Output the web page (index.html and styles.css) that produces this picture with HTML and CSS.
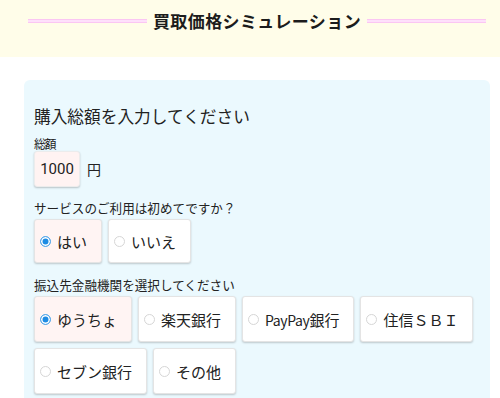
FILE: index.html
```html
<!DOCTYPE html>
<html lang="ja">
<head>
<meta charset="utf-8">
<title>買取価格シミュレーション</title>
<link rel="stylesheet" href="styles.css">
</head>
<body>
<header class="hero">
  <span class="rule"></span>
  <h1 class="title">買取価格シミュレーション</h1>
  <span class="rule"></span>
</header>
<main class="card">
  <h2 class="heading">購入総額を入力してください</h2>
  <div class="field-label">総額</div>
  <div class="amount-row">
    <input class="amount" type="text" value="1000">
    <span class="unit">円</span>
  </div>
  <div class="q-label">サービスのご利用は初めてですか？</div>
  <div class="options">
    <label class="opt checked"><input type="radio" name="first" checked><span>はい</span></label>
    <label class="opt"><input type="radio" name="first"><span>いいえ</span></label>
  </div>
  <div class="q-label q-bank">振込先金融機関を選択してください</div>
  <div class="options banks">
    <label class="opt checked"><input type="radio" name="bank" checked><span>ゆうちょ</span></label>
    <label class="opt"><input type="radio" name="bank"><span>楽天銀行</span></label>
    <label class="opt"><input type="radio" name="bank"><span><span class="latin">PayPay</span>銀行</span></label>
    <label class="opt"><input type="radio" name="bank"><span>住信ＳＢＩ</span></label>
    <label class="opt"><input type="radio" name="bank"><span>セブン銀行</span></label>
    <label class="opt"><input type="radio" name="bank"><span>その他</span></label>
  </div>
</main>
</body>
</html>
```
FILE: styles.css
```css
html, body {
  margin: 0;
  padding: 0;
  background: #ffffff;
  font-family: "Noto Sans CJK JP", "Noto Sans", sans-serif;
  color: #222222;
}

.hero {
  height: 57px;
  background: #fffde9;
  display: flex;
  align-items: flex-start;
  padding: 9px 14px 0 28px;
  box-sizing: border-box;
  gap: 6px;
}

.rule {
  flex: 1;
  height: 2px;
  margin-top: 10px;
  border-top: 1px solid #fbc6f3;
  border-bottom: 1px solid #fbc6f3;
  background: #fee0fb;
}

.title {
  margin: 0;
  font-size: 17px;
  font-weight: 700;
  line-height: 24px;
  letter-spacing: 0.4px;
  color: #1c1c1c;
}

.card {
  margin: 23px 10px 0 24px;
  background: #ebf9fe;
  border-radius: 6px;
  padding: 25px 10px 10px 10px;
  min-height: 320px;
  box-sizing: border-box;
}

.heading {
  margin: 0;
  font-size: 16.7px;
  font-weight: 400;
  line-height: 22px;
  color: #222;
}

.field-label {
  margin-top: 9px;
  font-size: 12px;
  line-height: 15px;
  letter-spacing: -1.5px;
}

.amount-row {
  display: flex;
  align-items: center;
  gap: 7px;
  margin-top: 0;
}

.amount {
  width: 46px;
  height: 36px;
  box-sizing: border-box;
  border: 1px solid #ececec;
  border-radius: 3px;
  background: #fff3f2;
  box-shadow: 0 1px 2px rgba(0, 0, 0, 0.22);
  font-family: "Roboto", "Noto Sans", sans-serif;
  font-size: 15px;
  color: #222;
  text-align: center;
  padding: 0;
}

.unit {
  font-size: 14px;
}

.q-label {
  margin-top: 13px;
  font-size: 12.6px;
  line-height: 16px;
}

.q-bank {
  margin-top: 14px;
}

.options {
  display: flex;
  flex-wrap: wrap;
  gap: 6px 6px;
  margin-top: 3px;
}

.opt {
  display: flex;
  align-items: center;
  gap: 6px;
  height: 44px;
  box-sizing: border-box;
  padding: 0 14px 0 5px;
  background: #ffffff;
  border: 1px solid #e4e4e4;
  border-radius: 3px;
  box-shadow: 0 1px 2px rgba(0, 0, 0, 0.2);
  font-size: 15px;
}

.banks .opt {
  height: 46px;
}

.opt.checked {
  background: #fff4f3;
}

.latin {
  font-size: 14px;
  letter-spacing: -0.4px;
}

.opt input {
  appearance: none;
  -webkit-appearance: none;
  margin: 0;
  width: 11px;
  height: 11px;
  border-radius: 50%;
  border: 1px solid #d6d6d6;
  background: #ffffff;
  flex: none;
}

.opt input:checked {
  border: 1px solid #5aaaea;
  background: #1d8be3;
  box-shadow: inset 0 0 0 1.5px #ffffff;
}
```
